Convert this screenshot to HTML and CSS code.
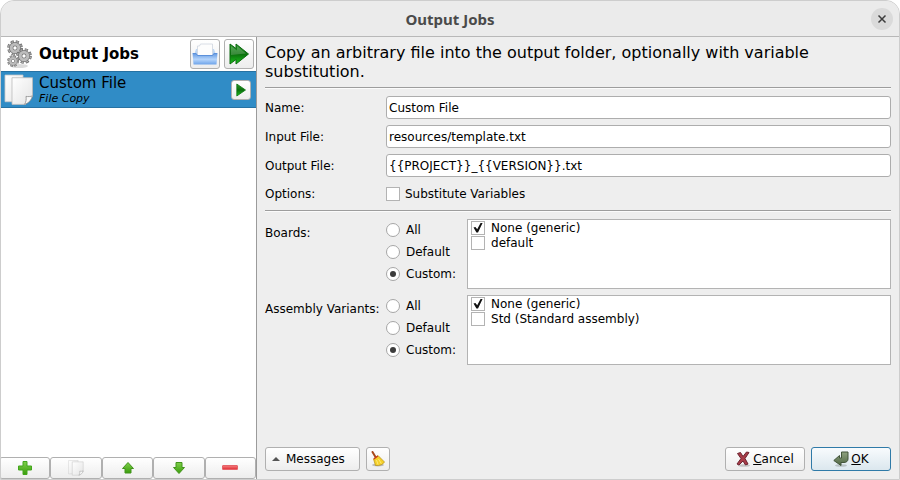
FILE: index.html
```html
<!DOCTYPE html>
<html lang="en">
<head>
<meta charset="utf-8">
<title>Output Jobs</title>
<link rel="stylesheet" href="styles.css">
</head>
<body>
<svg class="defs" aria-hidden="true">
  <defs>
    <linearGradient id="green" x1="0" y1="0" x2="0" y2="1"><stop offset="0" stop-color="#2c9a2c"/><stop offset=".5" stop-color="#0a6e0c"/><stop offset="1" stop-color="#1cc41c"/></linearGradient>
    <linearGradient id="lime" x1="0" y1="0" x2="0" y2="1"><stop offset="0" stop-color="#7fd04a"/><stop offset="1" stop-color="#3a9d0c"/></linearGradient>
    <linearGradient id="blue" x1="0" y1="0" x2="0" y2="1"><stop offset="0" stop-color="#5c94e0"/><stop offset=".55" stop-color="#b4d4fb"/><stop offset="1" stop-color="#6ea4ea"/></linearGradient>
    <linearGradient id="paper" x1="0" y1="0" x2="1" y2="1"><stop offset="0" stop-color="#ffffff"/><stop offset="1" stop-color="#e4e4e4"/></linearGradient>
    <linearGradient id="red" x1="0" y1="0" x2="0" y2="1"><stop offset="0" stop-color="#f58080"/><stop offset="1" stop-color="#e02c34"/></linearGradient>
    <linearGradient id="olive" x1="0" y1="0" x2="0" y2="1"><stop offset="0" stop-color="#8fa381"/><stop offset="1" stop-color="#4f6643"/></linearGradient>
    <symbol id="gear" viewBox="-10 -10 20 20">
      <circle r="7.6" fill="none" stroke="#6e6e6e" stroke-width="4.4" stroke-dasharray="3.6 2.37"/>
      <circle r="7.4" fill="none" stroke="#b4b4b4" stroke-width="3" stroke-dasharray="2 3.81" stroke-dashoffset="-.8"/>
      <circle r="4.800" fill="none" stroke="#747474" stroke-width="5.400"/>
      <circle r="4.800" fill="none" stroke="#bcbcbc" stroke-width="3.600"/>
    </symbol>
    <symbol id="pages" viewBox="0 0 30 30">
      <path d="M1 1h18v25H1z" fill="url(#paper)" stroke="#c9c9c9" stroke-width=".8"/>
      <path d="M8 3.500h20.500v17.500l-7 7.500H8z" fill="url(#paper)" stroke="#bcbcbc" stroke-width=".8"/>
      <path d="M28.500 20.500c-2 .8-4.500.8-6.500.5.500 2.500 0 5.500-1.500 7.500 4-1 7-4 8-8z" fill="#f8f8f8" stroke="#8f8f8f" stroke-width=".8"/>
    </symbol>
  </defs>
</svg>
<div class="window">
  <header class="titlebar">
    <h1>Output Jobs</h1>
    <button class="close" type="button" aria-label="Close"><svg width="10" height="10" viewBox="0 0 10 10"><path d="M1.500 1.500l7 7M8.500 1.500l-7 7" stroke="#3d3d3d" stroke-width="1.500"/></svg></button>
  </header>
  <div class="content">
    <aside class="sidebar">
      <div class="jobs-header">
        <svg class="gears" width="26" height="30" viewBox="0 0 26 30">
          <ellipse cx="13" cy="27" rx="9" ry="2" fill="#dcdcdc"/>
          <use href="#gear" x="1" y="1" width="16" height="16"/>
          <use href="#gear" x="10" y="9" width="16" height="16"/>
          <use href="#gear" x="1" y="16" width="12" height="12"/>
        </svg>
        <h2>Output Jobs</h2>
        <button class="btn large" type="button" aria-label="Open output folder"><svg width="26" height="24" viewBox="0 0 26 24">
          <path d="M2 13l2-6h18l2 6z" fill="#bed7f4"/>
          <path d="M5.500 14V4h2l1-2h12v12z" fill="#fdfdfd" stroke="#cfd6df" stroke-width=".8"/>
          <path d="M.5 11h3.500l1.500 2h15l1.500-2h3.500l-1 11.500h-23z" fill="url(#blue)"/>
          <path d="M1 11.500h3l1.500 2h15l1.500-2h3" fill="none" stroke="#5c90da"/>
        </svg></button>
        <button class="btn large" type="button" aria-label="Run all jobs"><svg width="22" height="24" viewBox="0 0 22 24"><path d="M2 2l6 4.500V2l12.500 10L8 22v-4.500L2 22z" fill="url(#green)" stroke="#0c6a10"/><path d="M3 4l6 4.500V4l9 7.500L3 13z" fill="#fff" opacity=".2"/></svg></button>
      </div>
      <ul class="jobs">
        <li class="job">
          <svg width="30" height="32" viewBox="0 0 30 30" preserveAspectRatio="none"><use href="#pages"/></svg>
          <div class="job-text"><span class="job-name">Custom File</span><span class="job-type">File Copy</span></div>
          <button class="btn small" type="button" aria-label="Run job"><svg width="10" height="14" viewBox="0 0 10 14"><path d="M.8 1l8.700 6-8.700 6z" fill="url(#green)" stroke="#0a7312" stroke-width=".8"/></svg></button>
        </li>
      </ul>
      <div class="toolbar">
        <button class="btn" type="button" aria-label="Add job"><svg width="16" height="16" viewBox="0 0 16 16"><path d="M6 1.500h4V6h4.500v4H10v4.500H6V10H1.500V6H6z" fill="url(#lime)" stroke="#43a61c"/></svg></button>
        <button class="btn" type="button" aria-label="Duplicate job"><svg width="16" height="16"><use href="#pages"/></svg></button>
        <button class="btn" type="button" aria-label="Move up"><svg width="14" height="14" viewBox="0 0 14 14"><path d="M7 1.500l5.500 6H10V12H4V7.500H1.500z" fill="url(#lime)" stroke="#43941c"/></svg></button>
        <button class="btn" type="button" aria-label="Move down"><svg width="14" height="14" viewBox="0 0 14 14"><path d="M7 12.500l5.500-6H10V1.500H4v5H1.500z" fill="url(#lime)" stroke="#43941c"/></svg></button>
        <button class="btn" type="button" aria-label="Remove job"><svg width="16" height="6" viewBox="0 0 16 6"><rect x=".5" y=".5" width="15" height="4" rx=".5" fill="url(#red)" stroke="#e4646a"/></svg></button>
      </div>
    </aside>
    <main class="details">
      <p class="description">Copy an arbitrary file into the output folder, optionally with variable substitution.</p>
      <hr>
      <div class="form">
        <label for="name">Name:</label><input class="field" id="name" type="text" value="Custom File">
        <label for="input">Input File:</label><input class="field" id="input" type="text" value="resources/template.txt">
        <label for="output">Output File:</label><input class="field" id="output" type="text" value="{{PROJECT}}_{{VERSION}}.txt">
        <span>Options:</span><label class="option"><input type="checkbox">Substitute Variables</label>
      </div>
      <hr>
      <div class="filters">
        <span class="caption">Boards:</span>
        <div class="radios" role="radiogroup" aria-label="Boards">
          <label><input type="radio" name="boards">All</label>
          <label><input type="radio" name="boards">Default</label>
          <label><input type="radio" name="boards" checked>Custom:</label>
        </div>
        <div class="list">
          <label><input type="checkbox" checked>None (generic)</label>
          <label><input type="checkbox">default</label>
        </div>
        <span class="caption">Assembly Variants:</span>
        <div class="radios" role="radiogroup" aria-label="Assembly Variants">
          <label><input type="radio" name="variants">All</label>
          <label><input type="radio" name="variants">Default</label>
          <label><input type="radio" name="variants" checked>Custom:</label>
        </div>
        <div class="list">
          <label><input type="checkbox" checked>None (generic)</label>
          <label><input type="checkbox">Std (Standard assembly)</label>
        </div>
      </div>
      <footer class="actions">
        <button class="btn messages" type="button"><svg width="8" height="4" viewBox="0 0 8 4"><path d="M0 4l4-4 4 4z" fill="#555"/></svg>Messages</button>
        <button class="btn clear" type="button" aria-label="Clear messages"><svg width="16" height="16" viewBox="0 0 16 16">
          <ellipse cx="8" cy="14" rx="6" ry="1.500" fill="#bbb"/>
          <path d="M2.500 1l3 5" stroke="#a8481c" stroke-width="2" stroke-linecap="round"/>
          <path d="M3.500 8l4.500-3.500 6.500 6.500c-1.500 2.500-4.500 3.800-9 3.500z" fill="#f5d02a" stroke="#b58e10" stroke-width=".7"/>
          <path d="M3.800 8l4-3" stroke="#c83a1c" stroke-width="1.500"/>
          <path d="M6.500 9l1.500 4.500M8.500 8l2.800 4.500" stroke="#fff08a" stroke-width=".8"/>
        </svg></button>
        <span class="spacer"></span>
        <button class="btn dialog" type="button"><svg width="15" height="16" viewBox="0 0 15 16"><ellipse cx="8" cy="14.500" rx="6" ry="1.300" fill="#c4c4c4"/><path d="M1.500 2.500L4.500 1.500 7 5.500 10.500 1l2.500.5L9 7.500l3 5.500-2.500 1L7 10l-4 4-2-1 4-5.500z" fill="#a83c48" stroke="#6d2430"/></svg><span><u>C</u>ancel</span></button>
        <button class="btn dialog default" type="button"><svg width="16" height="16" viewBox="0 0 16 16"><ellipse cx="8" cy="14.500" rx="6" ry="1.300" fill="#b9c3c6"/><path d="M8.500 1h6.500v7c0 2-1.500 3.500-4 3.500H8V14.500L.8 9.500 6.500 4.500v2.500h2z" fill="url(#olive)" stroke="#42553a"/></svg><span><u>O</u>K</span></button>
      </footer>
    </main>
  </div>
</div>
</body>
</html>
```

FILE: styles.css
```css
* {
  box-sizing: border-box;
}

body {
  margin: 0;
  background: #fff;
  color: #000;
  font: 12px/14px "DejaVu Sans", sans-serif;
}

button,
input {
  margin: 0;
  color: inherit;
  font: inherit;
}

svg {
  display: block;
  flex: none;
}

.defs {
  position: absolute;
  width: 0;
  height: 0;
}

.window {
  display: flex;
  flex-direction: column;
  min-height: 100vh;
  border: 1px solid #cdcdcd;
  border-radius: 14px 14px 0 0;
  background: #eee;
  overflow: hidden;
}

.titlebar {
  display: grid;
  grid-template-columns: 1fr auto 1fr;
  align-items: center;
  height: 36px;
  padding: 0 6px;
  border-bottom: 1px solid #b8b8b8;
  background: #ebebeb;
}

.titlebar h1 {
  grid-column: 2;
  margin: 0;
  color: #4a4a4a;
  font: bold 15px/18px "Noto Sans", sans-serif;
}

.close {
  display: grid;
  place-items: center;
  justify-self: end;
  width: 22px;
  height: 22px;
  padding: 0;
  border: 0;
  border-radius: 50%;
  background: #dadada;
}

.content {
  display: flex;
  flex: 1;
}

.sidebar {
  display: flex;
  flex: 0 0 256px;
  flex-direction: column;
  border-right: 1px solid #9b9b9b;
  background: #fff;
}

.jobs-header {
  display: flex;
  align-items: center;
  gap: 4px;
  height: 34px;
  padding: 0 2px 0 5px;
}

.jobs-header h2 {
  flex: 1;
  margin: 0 0 0 3px;
  font-size: 15px;
  line-height: 18px;
}

.btn {
  display: flex;
  align-items: center;
  justify-content: center;
  gap: 6px;
  padding: 0;
  border: 1px solid #b0b0b0;
  border-radius: 3px;
  background: linear-gradient(#fff, #ededed);
}

.large {
  width: 30px;
  height: 30px;
}

.small {
  width: 20px;
  height: 20px;
}

.jobs {
  flex: 1;
  margin: 0;
  padding: 0;
  list-style: none;
}

.job {
  display: flex;
  align-items: center;
  gap: 5px;
  height: 37px;
  padding: 0 5px 0 3px;
  border: solid #2672a3;
  border-width: 1px 0;
  background: #308cc6;
}

.job-text {
  display: flex;
  flex: 1;
  flex-direction: column;
}

.job-name {
  font-size: 15px;
  line-height: 18px;
}

.job-type {
  font-size: 11px;
  font-style: italic;
}

.toolbar {
  display: flex;
  margin-left: -2px;
}

.toolbar .btn {
  flex: 1;
  height: 22px;
}

.details {
  display: flex;
  flex: 1;
  flex-direction: column;
  min-width: 0;
  padding: 6px 8px 8px;
}

.description {
  margin: 0 0 6px;
  font-size: 16px;
  line-height: 19px;
}

hr {
  width: 100%;
  height: 2px;
  margin: 0 0 7px;
  border: solid #9d9d9d;
  border-width: 1px 0 0;
  background: #fbfbfb;
}

.form {
  display: grid;
  grid-template-columns: 115px 1fr;
  align-items: center;
  gap: 6px;
  margin-bottom: 6px;
}

.field {
  width: 100%;
  height: 23px;
  padding: 0 2px;
  border: 1px solid #adadad;
  border-radius: 3px;
  background: #fff;
}

.option,
.radios label,
.list label {
  display: flex;
  align-items: center;
  gap: 6px;
}

.option {
  gap: 5px;
  height: 21px;
}

[type="checkbox"],
[type="radio"] {
  display: grid;
  flex: none;
  place-items: center;
  width: 14px;
  height: 14px;
  border: 1px solid #b3b3b3;
  background: #fff;
  appearance: none;
}

[type="radio"] {
  border-color: #a6a6a6;
  border-radius: 50%;
}

[type="radio"]:checked::before {
  width: 6px;
  height: 6px;
  border-radius: 50%;
  background: #3c3c3c;
  content: "";
}

[type="checkbox"]:checked::before {
  width: 10px;
  height: 10px;
  background: #111;
  clip-path: polygon(5% 50%, 24% 44%, 42% 68%, 78% 0, 98% 0, 50% 100%, 34% 100%);
  content: "";
}

.filters {
  display: grid;
  grid-template-columns: 115px auto 1fr;
  gap: 6px;
}

.caption {
  padding-top: 7px;
  white-space: nowrap;
}

.radios {
  display: flex;
  flex-direction: column;
  padding-right: 5px;
}

.radios label {
  height: 22px;
}

.list {
  min-height: 70px;
  padding: 0 3px;
  border: 1px solid #b3b3b3;
  background: #fff;
}

.list label {
  height: 15px;
}

.actions {
  display: flex;
  align-items: center;
  gap: 6px;
  margin-top: auto;
}

.actions .btn {
  height: 24px;
}

.messages {
  padding: 0 14px 0 6px;
}

.clear {
  width: 24px;
}

.spacer {
  flex: 1;
}

.actions .dialog {
  gap: 2px;
  width: 80px;
}

.actions .default {
  border-color: #2f7aa8;
  background: linear-gradient(#f8fbfd, #dbe7ee);
}
```
